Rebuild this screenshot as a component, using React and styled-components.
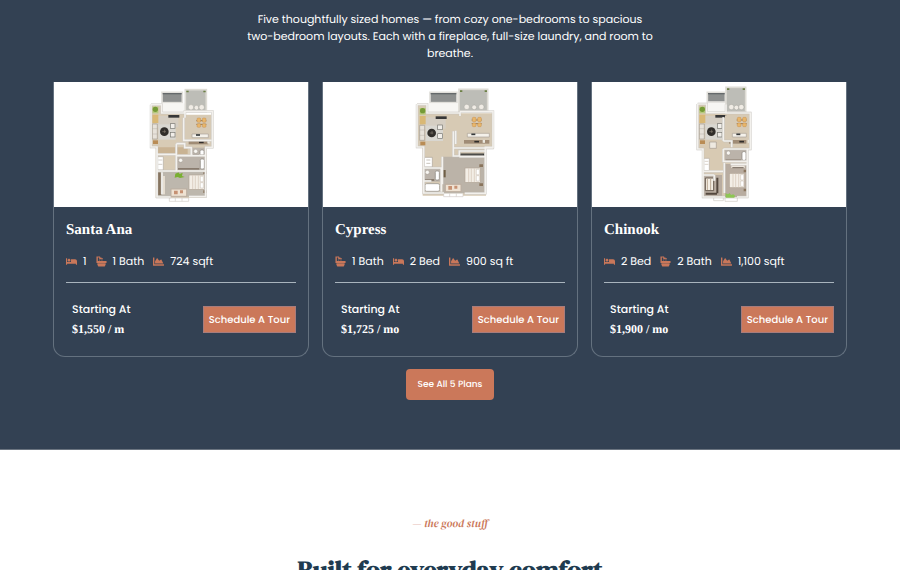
import React from "react";
import styled, { createGlobalStyle } from "styled-components";
import { FaBed, FaChartArea } from "react-icons/fa";

const sans = `Poppins, Inter, "Open Sans", sans-serif`;
const serif = `"Liberation Serif", "Times New Roman", serif`;
const display = `"DM Serif Display", "Playfair Display", "Liberation Serif", serif`;

const GlobalStyle = createGlobalStyle`
  * { box-sizing: border-box; }
  html { scrollbar-width: none; }
  body { margin: 0; background: #fff; font-family: ${sans}; text-rendering: geometricPrecision; }
  button { text-rendering: inherit; }
  h2, h3, p, ul { margin: 0; padding: 0; }
`;

const PlansSection = styled.section`
  display: flex;
  flex-direction: column;
  align-items: center;
  padding: 11px 53px 49px;
  background: #334153;
  color: #fff;
  border-bottom: 1px solid #6b7480;
`;

const Intro = styled.p`
  max-width: 410px;
  font-size: 11px;
  line-height: 17px;
  text-align: center;
`;

const PlanGrid = styled.div`
  display: grid;
  grid-template-columns: repeat(3, minmax(0, 1fr));
  gap: 13px;
  width: 100%;
  margin-top: 20px;
`;

const Card = styled.article`
  border: 1px solid #64717f;
  border-top: 0;
  border-radius: 0 0 12px 12px;
`;

const Picture = styled.div`
  display: flex;
  justify-content: center;
  background: #fff;
  svg { display: block; width: 100px; height: 125px; }
`;

const CardBody = styled.div`
  padding: 13px 12px 17px;
`;

const PlanName = styled.h3`
  font: bold 15px/20px ${serif};
`;

const Specs = styled.ul`
  display: flex;
  gap: 9px;
  margin-top: 12px;
  padding-bottom: 12px;
  border-bottom: 1px solid #a9b4bd;
  list-style: none;
`;

const Spec = styled.li`
  display: flex;
  align-items: center;
  gap: 6px;
  font-size: 11px;
  line-height: 18px;
  white-space: nowrap;
  svg { width: 11px; height: 11px; color: #c9775a; }
`;

const CardFooter = styled.div`
  display: flex;
  align-items: center;
  justify-content: space-between;
  margin-top: 16px;
  padding-left: 6px;
`;

const PriceLabel = styled.p`
  font-size: 11px;
  font-weight: 500;
  line-height: 20px;
`;

const Price = styled.p`
  font: bold 12px/20px ${serif};
`;

const TourButton = styled.button`
  padding: 4px 5px;
  border: 1px solid #a77c7c;
  background: #cb785a;
  color: #fff;
  font: 500 10px/17px ${sans};
  white-space: nowrap;
  cursor: pointer;
`;

const AllPlansLink = styled.a`
  margin-top: 12px;
  padding: 8px 12px 7px;
  border-radius: 4px;
  background: #cb785a;
  color: #fff;
  font-size: 9px;
  font-weight: 500;
  line-height: 16px;
  text-decoration: none;
`;

const ComfortSection = styled.section`
  padding: 66px 24px 40px;
  text-align: center;
`;

const Eyebrow = styled.p`
  color: #cb785a;
  font: italic 11px/16px ${display};
`;

const Heading = styled.h2`
  margin-top: 20px;
  color: #203b50;
  font: bold 26px/36px ${display};
`;

const BathIcon = () => (
  <svg viewBox="0 0 24 24" fill="currentColor" aria-hidden="true">
    <path d="M1 1h8v2H4v9H1zM8 3h4v2h3v2H7V3zM7 8h2v2H7zM12 8h2v2h-2zM1 11h22v4H1zM3 16h18v3l-2 4H5l-2-4z" />
  </svg>
);

const SPEC_ICONS = { bed: FaBed, bath: BathIcon, area: FaChartArea };

const Wall = ({ d, w = 5 }) => (
  <>
    <path d={d} fill="none" stroke="#c3c0bb" strokeWidth={w + 2} />
    <path d={d} fill="none" stroke="#f3f1ed" strokeWidth={w} />
  </>
);

const Balcony = ({ x, y, w, h }) => (
  <g>
    <rect x={x} y={y} width={w} height={h} fill="#bdbdb7" stroke="#dedcd5" strokeWidth="5" />
    <path d={`M${x + 3} ${y + 3}h7v5h-7zM${x + w - 9} ${y + 3}h7v5h-7z`} fill="#6c8045" />
    <g fill="#f0ece5" stroke="#91918c">
      <circle cx={x + w * 0.27} cy={y + h * 0.8} r="8" />
      <circle cx={x + w * 0.53} cy={y + h * 0.82} r="7" />
      <circle cx={x + w * 0.78} cy={y + h * 0.8} r="8" />
    </g>
  </g>
);

const Closet = ({ x, y, w, h }) => (
  <g>
    <rect x={x} y={y} width={w} height={h} fill="#8e908f" stroke="#e1dfda" strokeWidth="5" />
    <path d={`M${x + 2} ${y + 4}h${w - 4}`} stroke="#65696b" strokeWidth="4" />
  </g>
);

const Living = ({ x, y }) => (
  <g>
    <rect x={x + 10} y={y + 28} width="68" height="34" fill="#d5cec3" />
    <path d={`M${x} ${y}h18v20h-18z`} fill="#b7c97d" />
    <circle cx={x + 9} cy={y + 8} r="8" fill="#759b37" />
    <path d={`M${x} ${y + 24}h18v25h-18z`} fill="#d9b875" />
    <path d={`M${x} ${y + 52}h15v45h-15z`} fill="#e7e2da" stroke="#a29b91" strokeWidth="2" />
    <path d={`M${x} ${y + 66}h15M${x} ${y + 82}h15`} stroke="#a29b91" />
    <path d={`M${x + 2} ${y + 101}h15v11h-15z`} fill="#b98c55" />
    <path d={`M${x + 18} ${y + 53}h52v46h-52z`} fill="#d9d7d1" />
    <circle cx={x + 36} cy={y + 75} r="13" fill="#302d2a" />
    <path d={`M${x + 30} ${y + 75}h11M${x + 37} ${y + 69}v10`} stroke="#81776c" strokeWidth="2" />
    <g fill="#f1eee9" stroke="#76756f" strokeWidth="2">
      <rect x={x + 54} y={y + 51} width="14" height="14" />
      <rect x={x + 54} y={y + 77} width="14" height="14" />
    </g>
    <path d={`M${x + 48} ${y + 29}h33`} stroke="#373737" strokeWidth="8" />
  </g>
);

const Kitchen = ({ x, y, w }) => (
  <g>
    <rect x={x} y={y} width={w} height="88" fill="#d6cab6" />
    <path d={`M${x + 35} ${y + 14}h30M${x + 35} ${y + 25}h30`} stroke="#9d7b50" strokeWidth="3" />
    <g fill="#e8b66b" stroke="#b77b3e">
      <rect x={x + 37} y={y + 6} width="11" height="13" rx="3" />
      <rect x={x + 53} y={y + 6} width="11" height="13" rx="3" />
      <rect x={x + 37} y={y + 23} width="11" height="11" rx="3" />
      <rect x={x + 53} y={y + 23} width="11" height="11" rx="3" />
    </g>
    <path d={`M${x + 22} ${y + 54}h${w - 30}v11h-${w - 30}z`} fill="#f4f1ea" stroke="#aaa297" strokeWidth="2" />
    <path d={`M${x + 34} ${y + 57}h12`} stroke="#36393a" strokeWidth="5" />
    <path d={`M${x + 12} ${y + 74}h${w - 20}v11h-${w - 20}z`} fill="#a08c76" />
    <path d={`M${x + 43} ${y + 79}h14`} stroke="#302d2b" strokeWidth="5" />
    <path d={`M${x + 68} ${y + 78}h7`} stroke="#ebe8df" strokeWidth="9" />
  </g>
);

const Bed = ({ x, y }) => (
  <g>
    <rect x={x} y={y} width="46" height="43" fill="#f3eee6" stroke="#b3a798" strokeWidth="2" />
    <path d={`M${x + 11} ${y + 1}v41M${x + 19} ${y + 1}v41M${x + 28} ${y + 1}v41`} stroke="#d2c4b3" strokeWidth="2" />
    <path d={`M${x + 34} ${y + 4}h9v16h-9zM${x + 34} ${y + 23}h9v16h-9z`} fill="#fff" stroke="#ada293" />
    <path d={`M${x + 43} ${y - 11}h11v8h-11zM${x + 43} ${y + 46}h11v8h-11z`} fill="#89745c" />
  </g>
);

const Desk = ({ x, y }) => (
  <g>
    <rect x={x} y={y} width="47" height="22" fill="#eee2d3" stroke="#bcaea0" strokeWidth="3" />
    <path d={`M${x + 9} ${y + 5}h11v11h-11zM${x + 27} ${y + 4}h9v9h-9z`} fill="#c69173" />
    <path d={`M${x - 5} ${y + 27}h58v10h-58zM${x + 13} ${y + 27}v10M${x + 33} ${y + 27}v10`} fill="#fff" stroke="#d1ccc7" strokeWidth="2" />
  </g>
);

const Bathroom = ({ x, y, w = 38, h = 43 }) => (
  <g>
    <rect x={x} y={y} width={w} height={h} fill="#bbb3aa" />
    <rect x={x + w - 15} y={y + 7} width="12" height={h - 12} rx="4" fill="#fff" stroke="#88837c" strokeWidth="2" />
    <circle cx={x + 10} cy={y + 11} r="6" fill="#f9f7f3" stroke="#8e8980" />
    <path d={`M${x + 2} ${y + h - 5}h${w - 20}`} stroke="#705f50" strokeWidth="4" />
  </g>
);

const SantaAnaPlan = () => (
  <svg viewBox="-26 12 300 375" role="img" aria-label="Santa Ana floor plan">
    <path d="M33 80h33v22h71v8h81v100h-16v68h-4v82H48V207H35z" fill="#d8cbb5" />
    <Closet x={67} y={43} w={61} h={31} />
    <path d="M66 76h70v30H66z" fill="#f7f6f3" />
    <Balcony x={137} y={35} w={63} h={66} />
    <Living x={38} y={86} />
    <Kitchen x={135} y={114} w={79} />
    <path d="M55 208h54v20H55zM109 208h35v20h-35z" fill="#c9b393" />
    <path d="M51 236h20v40H51z" fill="#fff" stroke="#b5ada3" strokeWidth="2" />
    <path d="M56 246h12M56 259h12" stroke="#bdb6ac" strokeWidth="2" />
    <Bathroom x={158} y={209} w={38} h={27} />
    <Bathroom x={113} y={236} w={84} h={42} />
    <path d="M52 280h146v76H52z" fill="#bdb7ad" />
    <path d="M51 283h14v68H51z" fill="#86745f" />
    <path d="M72 294v55" stroke="#eee5d8" strokeWidth="7" />
    <Bed x={148} y={291} />
    <Desk x={94} y={333} />
    <path d="m107 287 10-4 3 5 9-4-2 10 8 3-14 3-7-3-9 2z" fill="#79af32" />
    <Wall d="M34 80v127h18v150h41M34 80h32v25h70v14M132 100h86v108h-20v148h-50M132 119v68h83M110 197v80M52 229h56M110 233h88M52 279h146M110 197h25v12h20v25M67 283v66" />
  </svg>
);

const CypressPlan = () => (
  <svg viewBox="-15 12 300 375" role="img" aria-label="Cypress floor plan">
    <path d="M35 80h33v26h199v107h-24v140H53V206H35z" fill="#d7cab4" />
    <Closet x={75} y={43} w={81} h={31} />
    <path d="M66 76h98v29H66z" fill="#f7f6f3" />
    <Balcony x={162} y={34} w={86} h={66} />
    <Living x={44} y={90} />
    <Kitchen x={165} y={112} w={96} />
    <path d="M58 238h24v29H58z" fill="#fff" stroke="#aaa197" strokeWidth="2" />
    <path d="M64 246h12M64 256h12" stroke="#c8c3bb" strokeWidth="3" />
    <path d="M114 236h127v110H114z" fill="#bbb3a8" />
    <path d="M162 231h77" stroke="#383a38" strokeWidth="9" />
    <path d="M168 231h66" stroke="#77736c" strokeWidth="2" />
    <Bed x={180} y={270} />
    <Desk x={121} y={319} />
    <path d="M113 276h9v22h-9z" fill="#705f46" />
    <Bathroom x={57} y={272} w={49} h={39} />
    <rect x="60" y="317" width="44" height="23" rx="5" fill="#fff" stroke="#aaa69e" strokeWidth="3" />
    <Wall d="M36 79v128h20v138h61M36 79h30v26h99v9M164 101h100v107h-23v138h-62M145 160v50h121M145 210v24h18v-15h78v17h-78M54 270h55v71M112 236v83M55 309h24M152 158v40" />
  </svg>
);

const ChinookPlan = () => (
  <svg viewBox="-34 12 300 375" role="img" aria-label="Chinook floor plan">
    <path d="M52 79h28v25h129v110h-9v140H67V213H52z" fill="#d8cab3" />
    <Closet x={81} y={43} w={54} h={29} />
    <path d="M79 75h58v30H79z" fill="#f7f6f3" />
    <Balcony x={137} y={28} w={59} h={74} />
    <Living x={57} y={86} />
    <Kitchen x={134} y={112} w={72} />
    <path d="M88 192h20v19H88z" fill="#eee9e0" stroke="#a49a8e" strokeWidth="2" />
    <path d="M70 241h17v37H70z" fill="#fff" stroke="#b8aea1" strokeWidth="2" />
    <path d="M73 250h11M73 259h11" stroke="#c8bdb0" strokeWidth="2" />
    <Bathroom x={134} y={214} w={66} h={38} />
    <path d="M134 258h66v100h-66zM69 291h56v67H69z" fill="#b8aca0" />
    <path d="M153 266h40" stroke="#eee7dd" strokeWidth="8" />
    <path d="M156 269h34" stroke="#75695d" strokeWidth="3" />
    <Bed x={147} y={286} />
    <path d="M75 300h25v38H75z" fill="#f4eee4" stroke="#65584d" strokeWidth="3" />
    <path d="M81 302v34M91 302v34" stroke="#bba995" strokeWidth="3" />
    <path d="M111 299v47M76 347h34" stroke="#54483e" strokeWidth="6" />
    <path d="m136 346 7 3 5-4 4 6 7-2 5 4-2 7h-26z" fill="#8dc653" />
    <path d="M100 358h29v10h-29zM134 360h37v10h-37z" fill="#fff" stroke="#cdc8c1" strokeWidth="2" />
    <Wall d="M52 78v135h16v144h66M170 357h31V213h9V105h-73v-26M52 78h27v26h57M129 118v71M129 213h80M129 213v37h70M68 280h60M132 255v90M102 291v17M68 291h34M129 189h25v19M151 259h48" />
  </svg>
);

const PLANS = [
  { name: "Santa Ana", Drawing: SantaAnaPlan, price: "$1,550 / m", specs: [["bed", "1"], ["bath", "1 Bath"], ["area", "724 sqft"]] },
  { name: "Cypress", Drawing: CypressPlan, price: "$1,725 / mo", specs: [["bath", "1 Bath"], ["bed", "2 Bed"], ["area", "900 sq ft"]] },
  { name: "Chinook", Drawing: ChinookPlan, price: "$1,900 / mo", specs: [["bed", "2 Bed"], ["bath", "2 Bath"], ["area", "1,100 sqft"]] },
];

const PlanCard = ({ name, Drawing, price, specs }) => (
  <Card>
    <Picture><Drawing /></Picture>
    <CardBody>
      <PlanName>{name}</PlanName>
      <Specs>
        {specs.map(([kind, label]) => {
          const Icon = SPEC_ICONS[kind];
          return <Spec key={kind}><Icon />{label}</Spec>;
        })}
      </Specs>
      <CardFooter>
        <div>
          <PriceLabel>Starting At</PriceLabel>
          <Price>{price}</Price>
        </div>
        <TourButton type="button">Schedule A Tour</TourButton>
      </CardFooter>
    </CardBody>
  </Card>
);

export default function App() {
  return (
    <>
      <GlobalStyle />
      <main>
        <PlansSection>
          <Intro>
            Five thoughtfully sized homes — from cozy one-bedrooms to spacious
            two-bedroom layouts. Each with a fireplace, full-size laundry, and room to breathe.
          </Intro>
          <PlanGrid>
            {PLANS.map((plan) => <PlanCard key={plan.name} {...plan} />)}
          </PlanGrid>
          <AllPlansLink href="#plans">See All 5 Plans</AllPlansLink>
        </PlansSection>
        <ComfortSection>
          <Eyebrow>— the good stuff</Eyebrow>
          <Heading>Built for everyday comfort</Heading>
        </ComfortSection>
      </main>
    </>
  );
}
